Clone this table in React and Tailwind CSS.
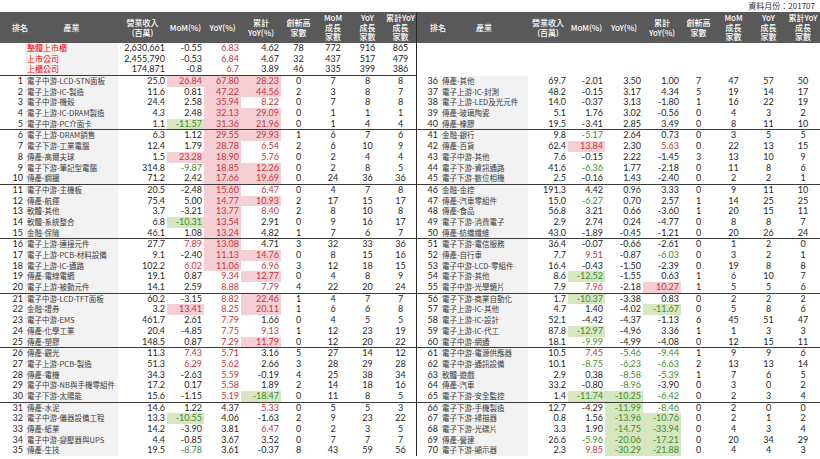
import React from "react";

const LEFT = [
  "1|電子中游-LCD-STN面板|25.0|26.84|67.80|28.23|0|7|8|8",
  "2|電子上游-IC-製造|11.6|0.81|47.22|44.56|2|3|8|7",
  "3|電子中游-機殼|24.4|2.58|35.94|8.22|0|7|8|8",
  "4|電子上游-IC-DRAM製造|4.3|2.48|32.13|29.09|0|1|1|1",
  "5|電子中游-PC介面卡|1.1|-11.57|31.36|21.96|0|1|4|4",
  "6|電子上游-DRAM銷售|6.3|1.12|29.55|29.93|1|6|7|6",
  "7|電子下游-工業電腦|12.4|1.79|28.78|6.54|2|6|10|9",
  "8|傳產-高爾夫球|1.5|23.28|18.90|5.76|0|2|4|4",
  "9|電子下游-筆記型電腦|314.8|-9.87|18.85|12.26|0|2|8|5",
  "10|傳產-鋼鐵|71.2|2.42|17.66|19.69|0|24|36|36",
  "11|電子中游-主機板|20.5|-2.48|15.60|6.47|0|4|7|8",
  "12|傳產-航運|75.4|5.00|14.77|10.93|2|17|15|17",
  "13|軟體-其他|3.7|-3.21|13.77|8.40|2|8|10|8",
  "14|軟體-系統整合|6.8|-10.31|13.54|2.91|0|9|16|17",
  "15|金融-保險|46.1|1.08|13.24|4.82|1|7|6|7",
  "16|電子上游-連接元件|27.7|7.89|13.08|4.71|3|32|33|36",
  "17|電子上游-PCB-材料設備|9.1|-2.40|11.13|14.76|0|8|15|16",
  "18|電子上游-IC-通路|102.2|6.02|11.06|6.96|3|12|18|15",
  "19|傳產-電線電纜|19.1|0.87|9.34|12.77|0|4|8|9",
  "20|電子上游-被動元件|14.1|2.59|8.88|7.79|4|22|20|24",
  "21|電子中游-LCD-TFT面板|60.2|-3.15|8.82|22.46|1|4|7|7",
  "22|金融-證券|3.2|13.41|8.25|20.11|1|6|6|8",
  "23|電子中游-EMS|461.7|2.61|7.79|1.66|0|4|5|5",
  "24|傳產-化學工業|20.4|-4.85|7.75|9.13|1|12|23|19",
  "25|傳產-塑膠|148.5|0.87|7.29|11.79|0|12|20|22",
  "26|傳產-觀光|11.3|7.43|5.71|3.16|5|27|14|12",
  "27|電子上游-PCB-製造|51.3|6.29|5.62|2.66|3|28|29|28",
  "28|傳產-電機|34.3|-2.63|5.59|-0.19|4|25|38|34",
  "29|電子中游-NB與手機零組件|17.2|0.17|5.58|1.89|2|14|18|16",
  "30|電子下游-太陽能|15.6|-1.15|5.19|-18.47|0|11|8|5",
  "31|傳產-水泥|14.6|1.22|4.37|5.33|0|5|5|3",
  "32|電子中游-儀器設備工程|13.3|-10.55|4.06|-1.63|2|9|23|22",
  "33|傳產-紙業|14.2|-3.90|3.81|6.47|0|2|3|5",
  "34|電子中游-變壓器與UPS|4.4|-0.85|3.67|3.52|0|7|7|7",
  "35|傳產-生技|19.5|-8.78|3.61|-0.37|8|43|59|56",
];

const RIGHT = [
  "36|傳產-其他|69.7|-2.01|3.50|1.00|7|47|57|50",
  "37|電子上游-IC-封測|48.2|-0.15|3.17|4.34|5|19|14|17",
  "38|電子上游-LED及光元件|14.0|-0.37|3.13|-1.80|1|16|22|19",
  "39|傳產-玻璃陶瓷|5.1|1.76|3.02|-0.56|0|4|3|2",
  "40|傳產-橡膠|19.5|-3.41|2.85|3.49|0|8|11|10",
  "41|金融-銀行|9.8|-5.17|2.64|0.73|0|3|5|5",
  "42|傳產-百貨|62.4|13.84|2.30|5.63|0|22|13|15",
  "43|電子中游-其他|7.6|-0.15|2.22|-1.45|3|13|10|9",
  "44|電子下游-資訊通路|41.6|-6.36|1.77|-2.18|0|11|8|6",
  "45|電子下游-數位相機|2.5|-0.16|1.43|-2.40|0|2|2|1",
  "46|金融-金控|191.3|4.42|0.96|3.33|0|9|11|10",
  "47|傳產-汽車零組件|15.0|-6.27|0.70|2.57|1|14|25|25",
  "48|傳產-食品|56.8|3.21|0.66|-3.60|1|20|15|11",
  "49|電子下游-消費電子|2.9|2.74|0.24|-4.77|0|8|8|7",
  "50|傳產-紡織纖維|43.0|-1.89|-0.45|-1.21|0|20|26|24",
  "51|電子下游-電信服務|36.4|-0.07|-0.66|-2.61|0|1|2|0",
  "52|傳產-自行車|7.7|9.51|-0.87|-6.03|0|3|2|1",
  "53|電子中游-LCD-零組件|16.4|-0.43|-1.50|-2.39|0|19|8|8",
  "54|電子下游-其他|8.6|-12.52|-1.55|0.63|1|6|10|7",
  "55|電子中游-光學鏡片|7.9|7.96|-2.18|10.27|1|5|5|6",
  "56|電子下游-商業自動化|1.7|-10.37|-3.38|0.83|0|2|2|2",
  "57|電子上游-IC-其他|4.7|1.40|-4.02|-11.67|0|5|8|6",
  "58|電子上游-IC-設計|52.1|-4.42|-4.37|-1.13|6|45|51|47",
  "59|電子上游-IC-代工|87.8|-12.97|-4.96|3.36|1|1|3|3",
  "60|電子中游-網通|18.1|-9.99|-4.99|-4.08|0|12|15|11",
  "61|電子中游-電源供應器|10.5|7.45|-5.46|-9.44|1|9|9|6",
  "62|電子中游-通訊設備|10.1|-8.75|-6.23|-6.63|2|13|13|14",
  "63|軟體-遊戲|2.9|0.38|-8.58|-5.39|1|7|6|5",
  "64|傳產-汽車|33.2|-0.80|-8.96|-3.90|0|3|0|2",
  "65|電子下游-安全監控|1.4|-11.74|-10.25|-6.42|0|2|3|4",
  "66|電子下游-手機製造|12.7|-4.29|-11.99|-8.46|0|2|0|0",
  "67|電子下游-掃描器|0.8|1.56|-13.96|-10.76|0|2|1|2",
  "68|電子下游-光碟片|3.3|1.90|-14.75|-33.94|0|4|3|4",
  "69|傳產-營建|26.6|-5.96|-20.06|-17.21|0|20|34|29",
  "70|電子下游-顯示器|2.3|9.85|-30.29|-21.88|0|4|4|3",
];

const SUMMARY = [
  "|整體上市櫃|2,630,661|-0.55|6.83|4.62|78|772|916|865",
  "|上市公司|2,455,790|-0.53|6.84|4.67|32|437|517|479",
  "|上櫃公司|174,871|-0.8|6.7|3.89|46|335|399|386",
];

const LCOLS = "grid-cols-[25px_93px_49px_37px_37px_40px_35px_34px_35px_31px]";
const RCOLS = "grid-cols-[23px_88px_40px_37px_38px_38px_35px_35px_35px_34px]";

const NUM = "font-['Lato','Noto_Sans_CJK_TC',sans-serif] text-[9px]";
const CJK = "font-['Noto_Sans_CJK_TC',sans-serif]";

function pct(v) {
  const n = parseFloat(v);
  if (n >= 10) return "bg-[#f5cfd3] text-[#c93541]";
  if (n > 5) return "text-[#c93541]";
  if (n <= -10) return "bg-[#d5e6c0] text-[#3e8e2e]";
  if (n < -5) return "text-[#3e8e2e]";
  return "text-[#1f1f1f]";
}

function Row({ d, cols, summary }) {
  const [rank, name, rev, mom, yoy, cum, a, b, c, e] = d.split("|");
  const h = summary ? "h-[10.67px] leading-[10.67px]" : "h-[10.7px] leading-[10.7px]";
  return (
    <div className={`grid ${cols} ${h} ${NUM} text-[#1f1f1f]`}>
      <div className="text-right pr-[2px]">{rank}</div>
      <div
        className={`bg-[#f2f2f2] pl-[2px] overflow-hidden whitespace-nowrap ${CJK} ${
          summary ? "text-[8px] text-[#ff0000]" : "text-[7.5px] text-[#3a3a3a]"
        }`}
      >
        {name}
      </div>
      <div className="text-right pr-[2px]">{rev}</div>
      <div className={`text-right pr-[2px] ${pct(mom)}`}>{mom}</div>
      <div className={`text-right pr-[2px] ${pct(yoy)}`}>{yoy}</div>
      <div className={`text-right pr-[2px] ${pct(cum)}`}>{cum}</div>
      <div className="text-center">{a}</div>
      <div className="text-center">{b}</div>
      <div className="text-center">{c}</div>
      <div className="text-center">{e}</div>
    </div>
  );
}

function Header({ cols, rankPad }) {
  const cell = "flex items-center justify-center text-center";
  return (
    <div
      className={`grid ${cols} h-[31px] bg-[#595959] text-white ${CJK} text-[8px] leading-[9.5px] font-medium`}
    >
      <div className={`flex items-center whitespace-nowrap ${rankPad}`}>排名</div>
      <div className={cell}>產業</div>
      <div className={cell}>
        營業收入
        <br />
        (百萬)
      </div>
      <div className={cell}>MoM(%)</div>
      <div className={cell}>YoY(%)</div>
      <div className={cell}>
        累計
        <br />
        YoY(%)
      </div>
      <div className={cell}>
        創新高
        <br />
        家數
      </div>
      <div className={cell}>
        MoM
        <br />
        成長
        <br />
        家數
      </div>
      <div className={cell}>
        YoY
        <br />
        成長
        <br />
        家數
      </div>
      <div className={`${cell} whitespace-nowrap`}>
        累計YoY
        <br />
        成長
        <br />
        家數
      </div>
    </div>
  );
}

function Blocks({ rows, cols, firstLine }) {
  const blocks = [];
  for (let i = 0; i < rows.length; i += 5) blocks.push(rows.slice(i, i + 5));
  return (
    <div>
      {blocks.map((blk, i) => (
        <div
          key={i}
          className={`border-t ${
            i === 0 && !firstLine ? "border-transparent" : "border-[#3a3a3a]"
          }`}
        >
          {blk.map((d) => (
            <Row key={d} d={d} cols={cols} />
          ))}
        </div>
      ))}
    </div>
  );
}

export default function App() {
  return (
    <div className="w-[820px] h-[459px] overflow-hidden bg-white">
      <div
        className={`h-[12px] flex items-center justify-end pr-[5px] text-[8px] text-[#333] ${CJK}`}
      >
        資料月份：201707
      </div>
      <div className="flex">
        <div className="w-[416px]">
          <Header cols={LCOLS} rankPad="pl-[12px]" />
          <div className="h-[32px]">
            {SUMMARY.map((d) => (
              <Row key={d} d={d} cols={LCOLS} summary />
            ))}
          </div>
          <Blocks rows={LEFT} cols={LCOLS} firstLine />
        </div>
        <div className="w-[404px] border-l border-[#2a2a2a]">
          <Header cols={RCOLS} rankPad="pl-[13px]" />
          <div className="h-[32px]" />
          <Blocks rows={RIGHT} cols={RCOLS} firstLine={false} />
        </div>
      </div>
    </div>
  );
}
